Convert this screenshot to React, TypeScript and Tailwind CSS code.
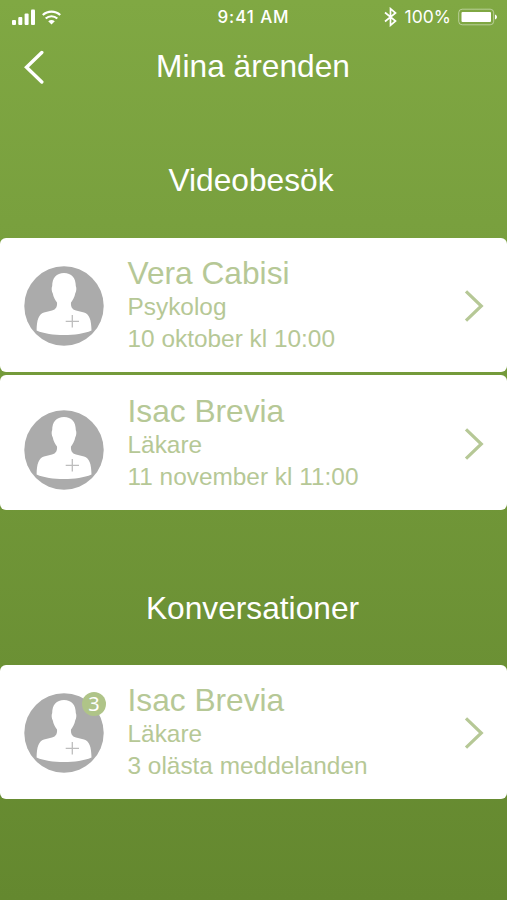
type Item = {
  name: string;
  role: string;
  info: string;
  unread?: number;
  avatarClass: string;
};

const visits: Item[] = [
  { name: "Vera Cabisi", role: "Psykolog", info: "10 oktober kl 10:00", avatarClass: "mt-[28px]" },
  { name: "Isac Brevia", role: "Läkare", info: "11 november kl 11:00", avatarClass: "mt-[34.5px]" },
];

const conversations: Item[] = [
  { name: "Isac Brevia", role: "Läkare", info: "3 olästa meddelanden", unread: 3, avatarClass: "mt-[28px]" },
];

function StatusBar() {
  return (
    <div className="grid grid-cols-3 items-center h-[34px] pl-3 pr-[9px] text-white font-['Inter',sans-serif] text-[17px]">
      <div className="flex items-center gap-[6px]">
        <svg width="24" height="16" viewBox="0 0 24 16" fill="currentColor">
          <rect x="0" y="11" width="4" height="5" rx="1" />
          <rect x="6.3" y="8" width="4" height="8" rx="1" />
          <rect x="12.6" y="4.5" width="4" height="11.5" rx="1" />
          <rect x="19" y="0.5" width="4" height="15.5" rx="1" />
        </svg>
        <svg width="19" height="15" viewBox="0 0 19 15" fill="none" stroke="currentColor" strokeWidth="2.2">
          <path d="M0.8 5C5.7 0.4 13.3 0.4 18.2 5" />
          <path d="M3.7 8.5C7 5.5 12 5.5 15.3 8.5" />
          <path d="M6.2 11.3C8.2 9.6 10.8 9.6 12.8 11.3L9.5 14.6Z" fill="currentColor" stroke="none" />
        </svg>
      </div>
      <p className="mt-px text-center font-medium text-[17px] tracking-[0.9px] pr-[3px] whitespace-nowrap">9:41 AM</p>
      <div className="flex items-center justify-end">
        <svg className="mr-[8px]" width="13" height="20" viewBox="0 0 13 20" fill="none" stroke="currentColor" strokeWidth="1.7">
          <path d="M1 5.5L11.5 14L6.5 18.3V1.7L11.5 6L1 14.5" />
        </svg>
        <span className="text-[17.5px]">100%</span>
        <svg className="ml-[7px]" width="40" height="18" viewBox="0 0 40 18">
          <rect x="0.7" y="1.2" width="35" height="15.6" rx="3.5" fill="none" stroke="#fff" strokeOpacity="0.45" strokeWidth="1" />
          <rect x="3.5" y="4" width="29.5" height="10" rx="1" fill="#fff" />
          <path d="M37 6.5C39.6 7.2 39.6 10.8 37 11.5Z" fill="#fff" />
        </svg>
      </div>
    </div>
  );
}

function Avatar({ unread }: { unread?: number }) {
  return (
    <div className="relative size-20">
      <svg width="80" height="80" viewBox="0 0 80 80">
        <circle cx="40" cy="40" r="39.7" fill="#ababab" />
        <path
          d="M40 7C47.5 7 51.8 12 51.8 20C52.8 22 52.4 25.5 51.2 27.5C50.8 31 48.5 34.5 47 36.5C46.6 40.5 48 43.5 52 44.6L60 46.6C65.5 48.3 67.3 54 67.5 64.5C60 67.8 50.5 69 40 69C29.5 69 20 67.8 12.6 64.5C12.8 54 14.6 48.3 20 46.6L28 44.6C32 43.5 33.4 40.5 33 36.5C31.5 34.5 29.2 31 28.8 27.5C27.6 25.5 27.2 22 28.2 20C28.2 12 32.5 7 40 7Z"
          fill="#fff"
        />
        <path d="M41.7 55.3H55M48.3 49V61.6" stroke="#bdbdbd" strokeWidth="1.3" fill="none" />
      </svg>
      {unread && (
        <span className="absolute -right-[2px] -top-[1px] flex size-6 items-center justify-center rounded-full bg-[#afc488] text-white font-['Noto_Sans',sans-serif] text-[20px] leading-none">
          {unread}
        </span>
      )}
    </div>
  );
}

function Card({ item }: { item: Item }) {
  return (
    <div className="flex h-[134.5px] rounded-[6px] bg-white pl-6 pr-[23px] text-[#b6c896]">
      <div className={item.avatarClass}>
        <Avatar unread={item.unread} />
      </div>
      <div className="ml-[23.5px] mt-[17.5px] flex-1 whitespace-nowrap">
        <h3 className="text-[31.7px] leading-9">{item.name}</h3>
        <p className="text-[24.4px] leading-8">{item.role}</p>
        <p className="text-[24.4px] leading-8">{item.info}</p>
      </div>
      <svg className="mt-[52.5px]" width="20" height="33" viewBox="0 0 20 33" fill="none" stroke="currentColor" strokeWidth="3.2">
        <path d="M2 1.3L17.3 16L2 30.7" />
      </svg>
    </div>
  );
}

export default function App() {
  return (
    <main className="h-[900px] w-full overflow-hidden bg-linear-to-b from-[#80a843] to-[#64882f] font-['Liberation_Sans',Arial,sans-serif]">
      <StatusBar />
      <header className="grid h-[66px] grid-cols-[60px_1fr_60px] text-white">
        <svg className="ml-[23px] mt-[16px]" width="22" height="34" viewBox="0 0 22 34" fill="none" stroke="currentColor" strokeWidth="3.4" strokeLinecap="round">
          <path d="M18.8 2.5L3.5 17.3L18.8 32" />
        </svg>
        <h1 className="mt-[14px] pr-px text-center text-[31.7px] leading-9">Mina ärenden</h1>
      </header>

      <section className="mt-[62px]">
        <h2 className="mb-[39.5px] text-center text-[31.7px] leading-9 text-white pr-[5px]">Videobesök</h2>
        <div className="flex flex-col gap-[3px]">
          {visits.map((item) => (
            <Card key={item.info} item={item} />
          ))}
        </div>
      </section>

      <section className="mt-20">
        <h2 className="mb-[39px] pr-[2px] text-center text-[31.7px] leading-9 text-white">Konversationer</h2>
        {conversations.map((item) => (
          <Card key={item.info} item={item} />
        ))}
      </section>
    </main>
  );
}
